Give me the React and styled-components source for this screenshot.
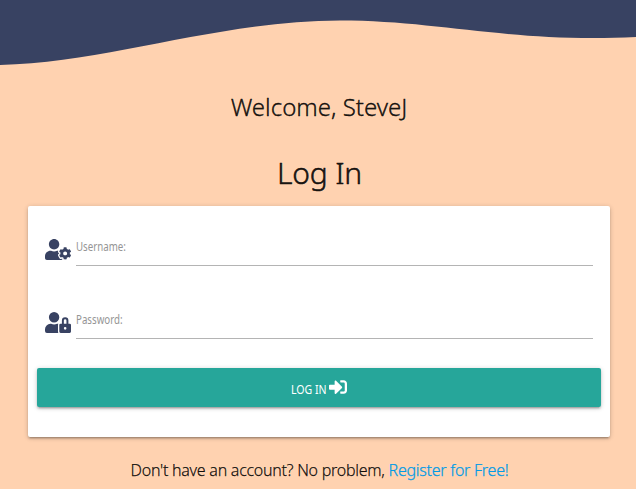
import React from "react";
import styled, { createGlobalStyle } from "styled-components";
import { FaUserCog, FaUserLock, FaSignInAlt } from "react-icons/fa";

const GlobalStyle = createGlobalStyle`
  * { box-sizing: border-box; }
  body { margin: 0; background: #ffd2b0; }
`;
const Page = styled.main`
  height: 489px;
  overflow: hidden;
  background: #ffd2b0;
  color: rgba(0, 0, 0, 0.9);
  font-family: "Noto Sans", "Open Sans", sans-serif;
`;
const Wave = styled.svg`
  display: block;
  width: 100%;
  height: 80px;
`;
const Welcome = styled.h2`
  margin: 9px 0 0;
  padding-left: 2px;
  font-size: 24px;
  line-height: 36px;
  font-weight: 300;
  -webkit-text-stroke: 0.35px currentColor;
  text-align: center;
`;
const Title = styled.h1`
  margin: 26px 0 0;
  padding-left: 3px;
  font-size: 30px;
  line-height: 44px;
  font-weight: 300;
  letter-spacing: -0.2px;
  -webkit-text-stroke: 0.5px currentColor;
  text-align: center;
`;
const Card = styled.form`
  width: 582px;
  height: 231px;
  margin: 11px 0 0 28px;
  padding: 17px 9px 0;
  background: #fff;
  border-radius: 2px;
  box-shadow: 0 2px 2px 0 rgba(0,0,0,.14), 0 3px 1px -2px rgba(0,0,0,.12), 0 1px 5px 0 rgba(0,0,0,.2);
`;
const Field = styled.label`
  display: flex;
  gap: 5px;
  height: 73px;
  padding: 0 8px;
`;
const FieldIcon = styled.span`
  display: flex;
  width: 26px;
  padding-top: 13px;
  color: #384262;
`;
const Line = styled.span`
  flex: 1;
  height: 43px;
  padding-top: 14px;
  border-bottom: 1px solid #b4b4b4;
  color: #959595;
  font-size: 12px;
  line-height: 20px;
`;
const LabelText = styled.span`
  display: inline-block;
  transform: scaleX(0.81);
  transform-origin: left;
`;
const Submit = styled.button`
  display: flex;
  align-items: center;
  justify-content: center;
  gap: 4px;
  width: 100%;
  height: 39px;
  margin-top: -1px;
  padding: 0 0 1px;
  border: 0;
  border-radius: 2px;
  background: #26a69a;
  color: #fff;
  font: 400 12px "Noto Sans", sans-serif;
  box-shadow: 0 2px 2px 0 rgba(0,0,0,.14), 0 3px 1px -2px rgba(0,0,0,.12), 0 1px 5px 0 rgba(0,0,0,.2);
`;
const SubmitText = styled.span`
  padding-top: 5px;
  margin-right: -6px;
  transform: scaleX(0.88);
  transform-origin: left;
`;
const Footer = styled.p`
  margin: 21px 0 0;
  padding-left: 3px;
  font-size: 16px;
  font-weight: 300;
  letter-spacing: -0.26px;
  -webkit-text-stroke: 0.25px currentColor;
  line-height: 24px;
  text-align: center;
  white-space: nowrap;
`;
const Link = styled.a`
  color: #039be5;
  text-decoration: none;
`;

export default function App() {
  return (
    <Page>
      <GlobalStyle />
      <Wave viewBox="0 0 636 80" preserveAspectRatio="none">
        <path fill="#384262" d="M0 0H636V37C510 43 440 20.5 340 20.5C220 20.5 110 62 0 65Z" />
      </Wave>
      <Welcome>Welcome, SteveJ</Welcome>
      <Title>Log In</Title>
      <Card>
        <Field><FieldIcon><FaUserCog size={27} /></FieldIcon><Line><LabelText>Username:</LabelText></Line></Field>
        <Field><FieldIcon><FaUserLock size={27} /></FieldIcon><Line><LabelText>Password:</LabelText></Line></Field>
        <Submit type="button"><SubmitText>LOG IN</SubmitText><FaSignInAlt size={18} /></Submit>
      </Card>
      <Footer>Don't have an account? No problem, <Link>Register for Free!</Link></Footer>
    </Page>
  );
}
